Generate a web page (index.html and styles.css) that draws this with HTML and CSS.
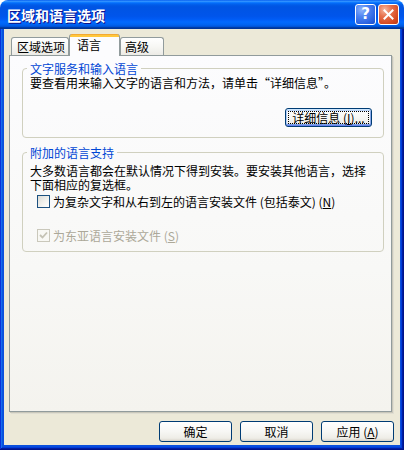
FILE: index.html
```html
<!DOCTYPE html>
<html lang="zh-CN">
<head>
<meta charset="utf-8">
<title>区域和语言选项</title>
<link rel="stylesheet" href="styles.css">
</head>
<body>
<div class="window">
  <div class="titlebar">
    <span class="title">区域和语言选项</span>
    <div class="title-btns">
      <span class="tbtn help">?</span>
      <span class="tbtn close"><svg width="11" height="11" viewBox="0 0 11 11"><path d="M1.5 1.5 L9.5 9.5 M9.5 1.5 L1.5 9.5" stroke="#fff" stroke-width="2" stroke-linecap="square"/></svg></span>
    </div>
  </div>
  <div class="frame">
    <div class="client">
      <div class="tabs">
        <div class="tab t1">区域选项</div>
        <div class="tab active t2">语言</div>
        <div class="tab t3">高级</div>
      </div>
      <div class="panel">
        <fieldset class="group g1">
          <legend>文字服务和输入语言</legend>
          <p class="desc d1">要查看用来输入文字的语言和方法，请单击“详细信息”。</p>
          <div class="btnrow"><button class="btn details">详细信息 (<u>I</u>)...</button></div>
        </fieldset>
        <fieldset class="group g2">
          <legend>附加的语言支持</legend>
          <p class="desc d2">大多数语言都会在默认情况下得到安装。要安装其他语言，选择<br>下面相应的复选框。</p>
          <label class="check c1"><span class="box"></span>为复杂文字和从右到左的语言安装文件 (包括泰文) (<u>N</u>)</label>
          <label class="check c2 disabled"><span class="box"><svg width="11" height="11" viewBox="0 0 11 11"><path d="M2 5 L4.5 7.5 L9 2.5" fill="none" stroke="#c4c2b4" stroke-width="1.8"/></svg></span>为东亚语言安装文件 (<u>S</u>)</label>
        </fieldset>
      </div>
      <div class="actions">
        <button class="btn act">确定</button>
        <button class="btn act">取消</button>
        <button class="btn act">应用 (<u>A</u>)</button>
      </div>
    </div>
  </div>
</div>
</body>
</html>
```
FILE: styles.css
```css
html, body {
  margin: 0;
  padding: 0;
  background: #ffffff;
}
body {
  font-family: "Noto Sans CJK SC", "Noto Sans", sans-serif;
  font-size: 12px;
  color: #000;
}
.window {
  width: 404px;
  height: 450px;
  display: flex;
  flex-direction: column;
}
.titlebar {
  height: 29px;
  flex: none;
  display: flex;
  align-items: center;
  padding-left: 7px;
  border-radius: 8px 8px 0 0;
  background: linear-gradient(180deg, #0058ee 0%, #3593ff 4%, #288eff 6%, #127dff 8%, #036ffc 10%, #0262ee 14%, #0057e5 20%, #0054e3 24%, #0055eb 56%, #005bf5 66%, #026afe 76%, #0062ef 86%, #0052d6 92%, #0040ab 94%, #003092 100%);
}
.title {
  color: #fff;
  font-weight: bold;
  font-size: 14px;
  line-height: 16px;
  text-shadow: 1px 1px 0 #0f1089;
  margin-top: 1px;
}
.title-btns {
  margin-left: auto;
  margin-right: 5px;
  display: flex;
  gap: 2px;
}
.tbtn {
  width: 19px;
  height: 19px;
  border: 1px solid #fff;
  border-radius: 3px;
  display: flex;
  align-items: center;
  justify-content: center;
  color: #fff;
  font-family: "DejaVu Sans", sans-serif;
  font-weight: bold;
  font-size: 15px;
  line-height: 19px;
}
.help {
  background: radial-gradient(circle at 30% 25%, #8fb4fb 0%, #4f84f2 35%, #2a62e0 75%, #1b4fc9 100%);
}
.close {
  background: radial-gradient(circle at 30% 25%, #f5b8a0 0%, #e7714d 35%, #d5481f 75%, #b93a17 100%);
}
.frame {
  flex: 1;
  display: flex;
  padding: 0 4px 5px 4px;
  background: #0a4fdd;
  box-shadow: inset -1px -1px #00138c, inset 1px 0 #0831d9, inset -2px -2px #001ea0, inset 2px 0 #166aee, inset -3px -3px #003bda, inset 3px 0 #0855dd;
}
.client {
  flex: 1;
  background: #ece9d8;
  display: flex;
  flex-direction: column;
}
.tabs {
  height: 21px;
  margin: 5px 0 0 7px;
  display: flex;
  align-items: flex-end;
}
.tab {
  box-sizing: border-box;
  height: 18px;
  border: 1px solid #919b9c;
  border-bottom: none;
  border-radius: 3px 3px 0 0;
  background: linear-gradient(180deg, #ffffff 0%, #f7f7f4 50%, #ecebe6 100%);
  line-height: 17px;
  white-space: nowrap;
}
.t1 {
  width: 58px;
  padding-left: 5px;
}
.t3 {
  width: 44px;
  padding-left: 4px;
}
.tab.active {
  width: 51px;
  height: 22px;
  margin-bottom: -1px;
  position: relative;
  z-index: 1;
  border-top: none;
  padding-left: 7px;
  padding-top: 3px;
  line-height: 15px;
  background: linear-gradient(180deg, #e68b2c 0px, #ffc73c 1px, #ffc73c 3px, #fcfcfe 3px);
}
.panel {
  flex: 1;
  margin: 0 8px 0 5px;
  border: 1px solid #919b9c;
  background: linear-gradient(180deg, #fcfcfe 0%, #f8f8f6 60%, #f4f3ee 100%);
  box-shadow: 1px 1px 0 #c9c7ba, 2px 2px 0 #e0ded2;
  display: flex;
  flex-direction: column;
}
.group {
  margin: 0 7px 0 12px;
  padding: 0 0 0 7px;
  border: 1px solid #d0d0bf;
  border-radius: 4px;
  min-width: 0;
}
.group legend {
  margin-left: -3px;
  padding: 0 3px;
  color: #0046d5;
  line-height: 13px;
}
.g1 {
  margin-top: 6px;
  padding-bottom: 10px;
}
.g2 {
  margin-top: 8px;
  padding-bottom: 9px;
}
.desc {
  margin: 0;
  line-height: 14px;
  white-space: nowrap;
}
.d1 {
  margin-top: 1px;
}
.d2 {
  margin-top: 5px;
}
.btnrow {
  margin-top: 18px;
  display: flex;
  justify-content: flex-end;
  padding-right: 11px;
}
.btn {
  font-family: inherit;
  font-size: 12px;
  color: #000;
  padding: 0;
  border: 1px solid #003c74;
  border-radius: 3px;
  background: linear-gradient(180deg, #ffffff 0%, #f7f7f4 50%, #eeede7 85%, #d9d4ca 100%);
  white-space: nowrap;
}
.details {
  width: 87px;
  height: 19px;
  line-height: 16px;
  box-shadow: inset 0 1px #cee7ff, inset 0 -1px #6982ee, inset 1px 0 #b4cff8, inset -1px 0 #8aa9e8, inset 0 2px #bcd4f6, inset 0 -2px #7ba2e7;
  outline: 1px dotted #000;
  outline-offset: -4px;
}
.check {
  display: flex;
  align-items: center;
  height: 13px;
  line-height: 13px;
  margin-left: 7px;
  white-space: nowrap;
}
.c1 {
  margin-top: 3px;
}
.c2 {
  margin-top: 21px;
}
.box {
  box-sizing: border-box;
  width: 13px;
  height: 13px;
  flex: none;
  margin-right: 3px;
  border: 1px solid #1c5180;
  background: linear-gradient(135deg, #dcdcd7 0%, #f4f4f0 60%, #ffffff 100%);
  display: flex;
  align-items: center;
  justify-content: center;
}
.disabled {
  color: #aca899;
}
.disabled .box {
  border-color: #cac8bb;
  background: #f8f8f4;
}
.actions {
  display: flex;
  justify-content: flex-end;
  gap: 8px;
  margin: 9px 6px 3px 0;
}
.act {
  width: 73px;
  height: 21px;
  line-height: 18px;
}
u {
  text-decoration: underline;
  text-underline-offset: 1px;
}
```
